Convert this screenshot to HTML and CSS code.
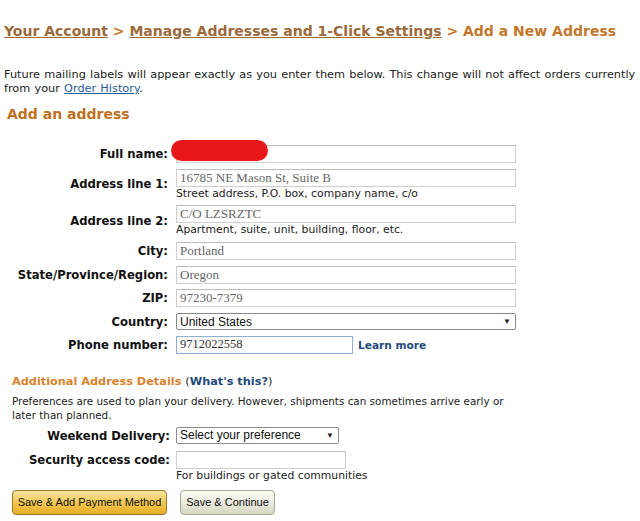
FILE: index.html
```html
<!DOCTYPE html>
<html lang="en">
<head>
    <meta charset="UTF-8">
    <title>Add a New Address</title>
    <link rel="stylesheet" href="styles.css">
</head>
<body>
    <h1 class="crumbs">
        <a href="#">Your Account</a> &gt; <a href="#">Manage Addresses and 1-Click Settings</a> &gt; Add a New Address
    </h1>
    <p class="intro">Future mailing labels will appear exactly as you enter them below. This change will not affect orders currently from your <a href="#">Order History</a>.</p>
    <h2 class="section-title">Add an address</h2>

    <form class="address-form">
        <label class="label">Full name:</label>
        <div class="field">
            <input type="text" class="box" value="">
            <span class="redact"></span>
        </div>

        <label class="label">Address line 1:</label>
        <div class="field">
            <input type="text" class="box" value="16785 NE Mason St, Suite B">
            <div class="hint">Street address, P.O. box, company name, c/o</div>
        </div>

        <label class="label">Address line 2:</label>
        <div class="field">
            <input type="text" class="box" value="C/O LZSRZTC">
            <div class="hint">Apartment, suite, unit, building, floor, etc.</div>
        </div>

        <label class="label">City:</label>
        <div class="field"><input type="text" class="box" value="Portland"></div>

        <label class="label">State/Province/Region:</label>
        <div class="field"><input type="text" class="box" value="Oregon"></div>

        <label class="label">ZIP:</label>
        <div class="field"><input type="text" class="box" value="97230-7379"></div>

        <label class="label">Country:</label>
        <div class="field">
            <div class="select wide"><span>United States</span><span class="arrow">&#9660;</span></div>
        </div>

        <label class="label">Phone number:</label>
        <div class="field inline">
            <input type="text" class="box phone" value="9712022558">
            <a href="#" class="learn">Learn more</a>
        </div>
    </form>

    <div class="extra">
        <h3 class="extra-title">Additional Address Details <span class="paren">(<a href="#">What's this?</a>)</span></h3>
        <p class="extra-text">Preferences are used to plan your delivery. However, shipments can sometimes arrive early or later than planned.</p>
        <div class="extra-form">
            <label class="label">Weekend Delivery:</label>
            <div class="field">
                <div class="select short"><span>Select your preference</span><span class="arrow">&#9660;</span></div>
            </div>

            <label class="label">Security access code:</label>
            <div class="field">
                <input type="text" class="box code" value="">
                <div class="hint">For buildings or gated communities</div>
            </div>
        </div>

        <div class="buttons">
            <button type="button" class="btn primary">Save &amp; Add Payment Method</button>
            <button type="button" class="btn secondary">Save &amp; Continue</button>
        </div>
    </div>
</body>
</html>
```

FILE: styles.css
```css
body {
    margin: 0;
    padding: 0 0 0 4px;
    font-family: "DejaVu Sans", Verdana, sans-serif;
    font-size: 11.3px;
    color: #111;
    background: #fff;
}
a {
    color: #1f5b99;
}
.crumbs {
    margin: 0;
    padding-top: 22px;
    font-size: 14px;
    line-height: 18px;
    font-weight: bold;
    color: #c4772c;
    white-space: nowrap;
}
.crumbs a {
    color: #9c6a3c;
}
.intro {
    margin: 28px 0 0;
    font-size: 11.3px;
    word-spacing: 0.6px;
    line-height: 14px;
    color: #222;
}
.section-title {
    margin: 10px 0 0 3px;
    font-size: 14px;
    line-height: 17px;
    color: #c0701f;
}
.address-form {
    display: grid;
    grid-template-columns: 164px 340px;
    column-gap: 8px;
    row-gap: 5.7px;
    align-items: center;
    margin-top: 22px;
}
.label {
    text-align: right;
    font-weight: bold;
    font-size: 11.6px;
    color: #111;
}
.field {
    position: relative;
}
.field.inline {
    display: flex;
    align-items: center;
    gap: 5px;
}
.box {
    display: block;
    box-sizing: border-box;
    width: 340px;
    height: 18px;
    margin: 0;
    padding: 0 3px;
    border: 1px solid #cfcfcf;
    border-top-color: #bdbdbd;
    font-family: "Liberation Serif", "DejaVu Serif", serif;
    font-size: 13px;
    color: #666;
    background: #fff;
}
.box.phone {
    width: 177px;
    border-color: #8fb0d4;
    color: #333;
    font-size: 12.5px;
}
.box.code {
    width: 170px;
}
.hint {
    font-size: 10.8px;
    line-height: 13px;
    color: #222;
}
.redact {
    position: absolute;
    left: -5px;
    top: -5px;
    width: 97px;
    height: 21px;
    border-radius: 11px;
    background: #e8181a;
}
.select {
    box-sizing: border-box;
    display: flex;
    justify-content: space-between;
    align-items: center;
    height: 17px;
    padding: 0 4px 0 3px;
    border: 1px solid #8a8a8a;
    border-radius: 2px;
    font-family: "Liberation Sans", Arial, sans-serif;
    font-size: 12px;
    color: #111;
    background: #fff;
}
.select.wide {
    width: 340px;
}
.select.short {
    width: 163px;
}
.arrow {
    font-size: 8px;
    color: #222;
}
.learn {
    font-weight: bold;
    font-size: 10.6px;
    color: #1f4a7a;
    text-decoration: none;
}
.extra {
    padding-left: 8px;
}
.extra-title {
    margin: 21px 0 0;
    font-size: 11.3px;
    line-height: 14px;
    color: #d9822b;
}
.paren {
    color: #222;
    font-weight: normal;
}
.paren a {
    color: #1f4a7a;
    font-weight: bold;
    text-decoration: none;
}
.extra-text {
    margin: 5px 0 0;
    width: 515px;
    font-size: 10.4px;
    line-height: 14px;
    color: #222;
}
.extra-form {
    display: grid;
    grid-template-columns: 158px 340px;
    column-gap: 6px;
    row-gap: 6px;
    align-items: start;
    margin-top: 5px;
}
.extra-form .label {
    line-height: 18px;
}
.buttons {
    display: flex;
    gap: 13px;
    margin-top: 8px;
}
.btn {
    height: 25px;
    padding: 0;
    border-radius: 4px;
    font-family: "Liberation Sans", Arial, sans-serif;
    font-size: 11px;
    color: #111;
    white-space: nowrap;
    cursor: pointer;
}
.btn.primary {
    width: 155px;
    border: 1px solid #9c7a2c;
    background: linear-gradient(#fbe3a0, #f2c54e 55%, #e8ad26);
}
.btn.secondary {
    width: 95px;
    border: 1px solid #a6a898;
    background: linear-gradient(#fbfbf5, #e9e9dc 55%, #d6d6c2);
}
```
